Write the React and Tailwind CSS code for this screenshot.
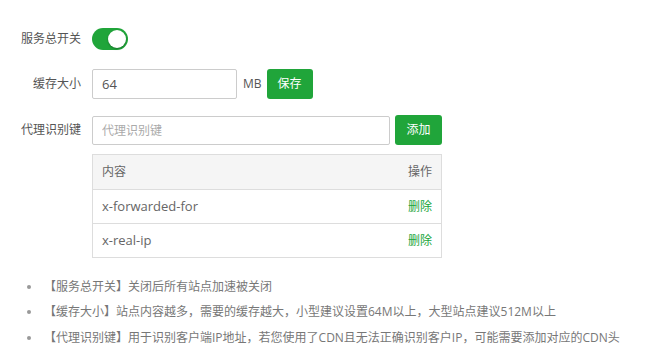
import React, { useState } from "react";

const font = { fontFamily: '"Open Sans", "Noto Sans CJK SC", sans-serif' };

const Row = ({ label, children, className = "" }) => (
  <div className={`flex items-center ${className}`}>
    <label className="w-[60px] text-right text-[12px] text-[#555] mr-[11px] whitespace-nowrap">{label}</label>
    {children}
  </div>
);

export default function App() {
  const [on, setOn] = useState(true);
  const [size, setSize] = useState("64");
  const keys = ["x-forwarded-for", "x-real-ip"];

  return (
    <div className="w-[663px] h-[362px] bg-white pl-[21px] pt-[24px] text-[#666]" style={font}>
      {/* switch */}
      <Row label="服务总开关" className="h-[30px]">
        <button
          onClick={() => setOn(!on)}
          className={`relative w-[36px] h-[22px] rounded-full ${on ? "bg-[#20a53a]" : "bg-[#ddd]"}`}
        >
          <span
            className={`absolute top-[2px] w-[18px] h-[18px] rounded-full bg-white shadow-[0_1px_2px_rgba(0,0,0,0.3)] ${on ? "left-[16px]" : "left-[2px]"}`}
          />
        </button>
      </Row>

      {/* cache size */}
      <Row label="缓存大小" className="mt-[15px] h-[30px]">
        <input
          value={size}
          onChange={(e) => setSize(e.target.value)}
          className="w-[145px] h-[30px] border border-[#ccc] rounded-[2px] px-[9px] text-[13px] text-[#555] outline-none"
        />
        <span className="ml-[6px] text-[12px] text-[#555]">MB</span>
        <button className="ml-[5px] w-[46px] h-[30px] rounded-[3px] bg-[#20a53a] text-white text-[12px]">保存</button>
      </Row>

      {/* proxy key */}
      <Row label="代理识别键" className="mt-[16px] h-[30px]">
        <input
          placeholder="代理识别键"
          className="w-[298px] h-[29px] border border-[#ccc] rounded-[2px] px-[9px] text-[12px] text-[#555] placeholder:text-[#aaa] outline-none"
        />
        <button className="ml-[5px] w-[47px] h-[30px] rounded-[3px] bg-[#20a53a] text-white text-[12px]">添加</button>
      </Row>

      {/* table */}
      <div className="ml-[71px] mt-[9px] w-[350px] border border-[#ddd] text-[12px]">
        <div className="flex justify-between items-center h-[34px] px-[9px] bg-[#f5f5f5] text-[#666]">
          <span>内容</span>
          <span>操作</span>
        </div>
        {keys.map((k) => (
          <div key={k} className="flex justify-between items-center h-[34px] px-[9px] border-t border-[#ddd] text-[#666]">
            <span className="text-[13px]">{k}</span>
            <span className="text-[#20a53a] cursor-pointer">删除</span>
          </div>
        ))}
      </div>

      {/* notes */}
      <ul className="mt-[16px] ml-[6px] text-[12px] text-[#777]">
        <li className="flex items-center h-[25px]">
          <span className="w-[4px] h-[4px] rounded-full bg-[#999] mr-[13px]" />
          【服务总开关】关闭后所有站点加速被关闭
        </li>
        <li className="flex items-center h-[26px]">
          <span className="w-[4px] h-[4px] rounded-full bg-[#999] mr-[13px]" />
          【缓存大小】站点内容越多，需要的缓存越大，小型建议设置64M以上，大型站点建议512M以上
        </li>
        <li className="flex items-center h-[25px]">
          <span className="w-[4px] h-[4px] rounded-full bg-[#999] mr-[13px]" />
          【代理识别键】用于识别客户端IP地址，若您使用了CDN且无法正确识别客户IP，可能需要添加对应的CDN头
        </li>
      </ul>
    </div>
  );
}
